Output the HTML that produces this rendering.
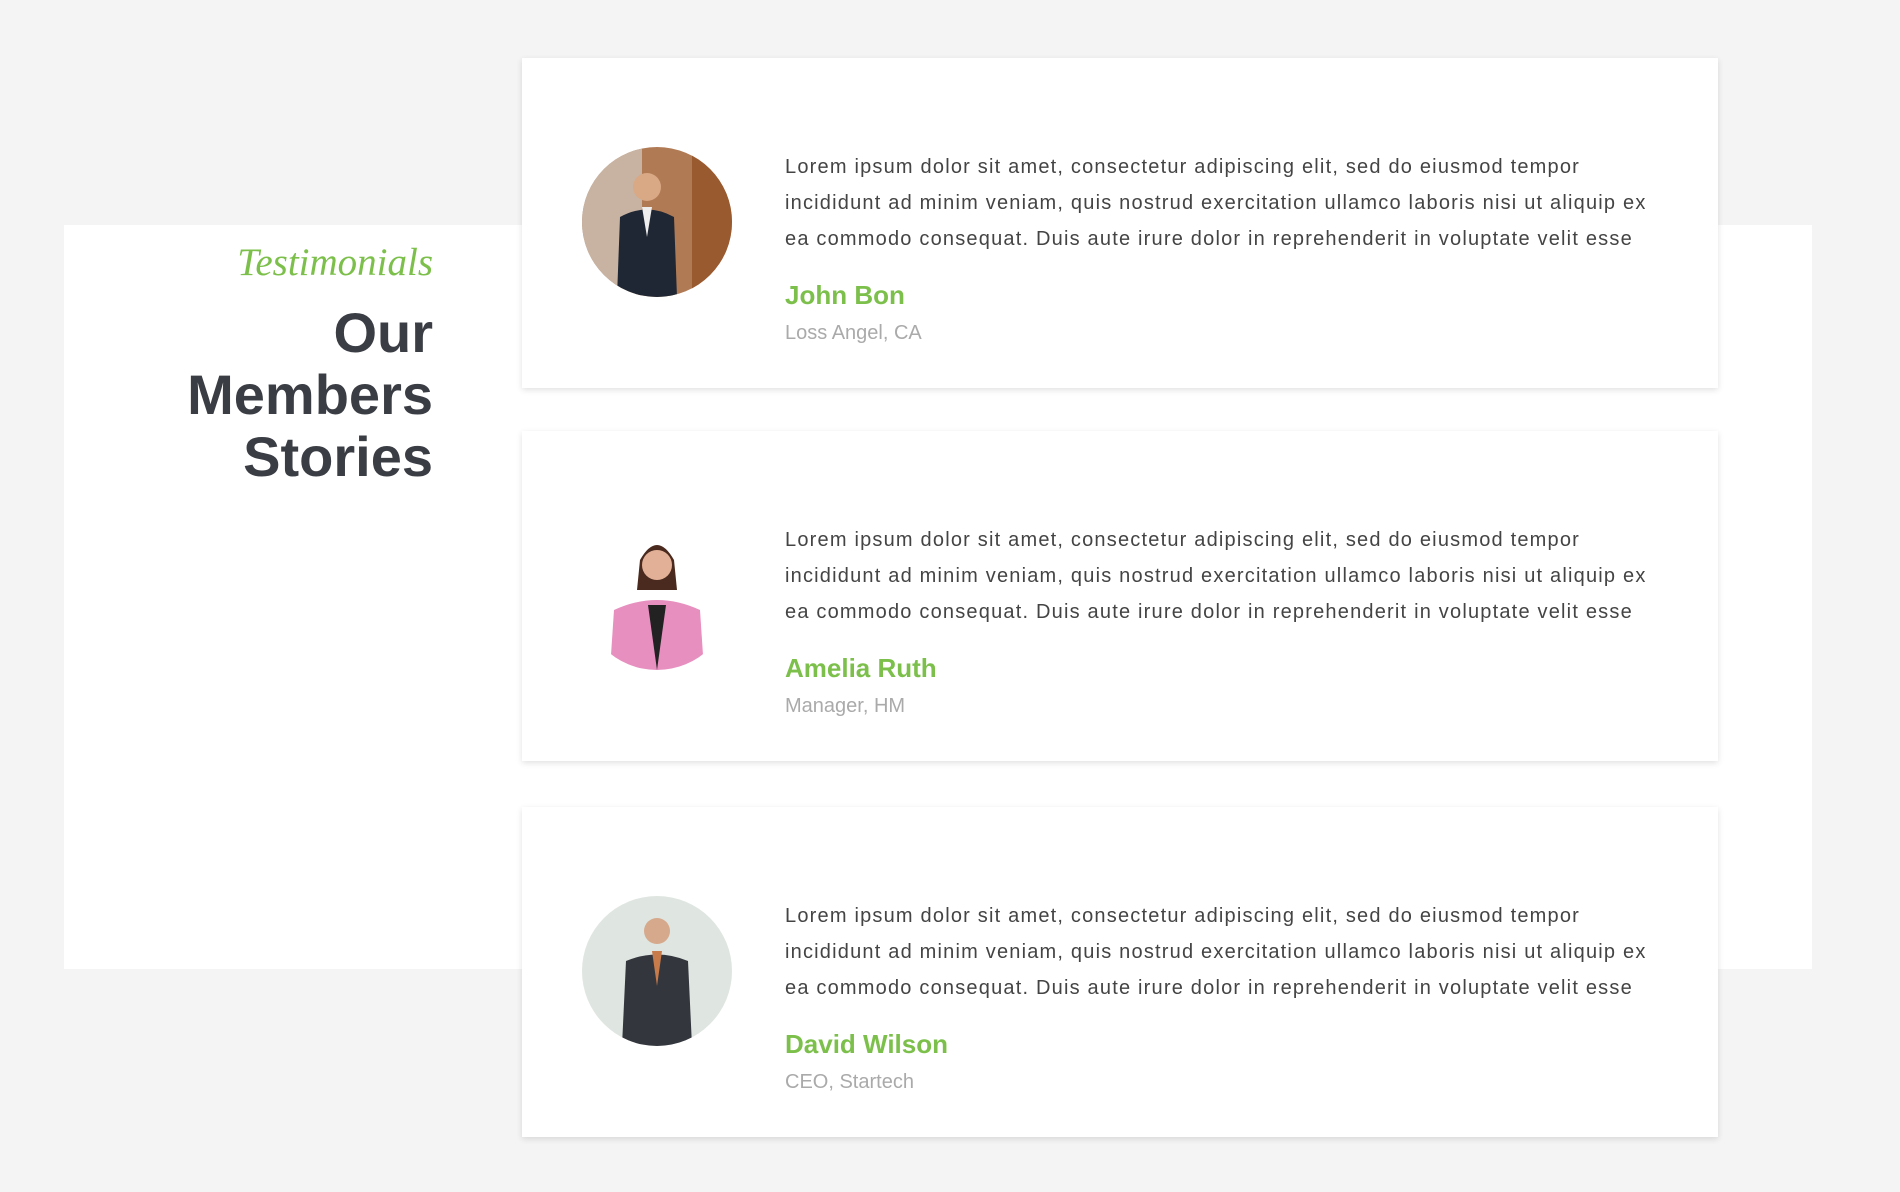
<!DOCTYPE html>
<html><head><meta charset="utf-8"><style>
body{margin:0;width:1900px;height:1192px;background:#f4f4f4;font-family:"Liberation Sans",sans-serif;position:relative;overflow:hidden}
.panel{position:absolute;left:64px;top:225px;width:1748px;height:744px;background:#fff}
.t1{position:absolute;right:1467px;top:240px;font-family:"Liberation Serif",cursive;font-style:italic;color:#7cc04b;font-size:39px}
.t2{position:absolute;right:1467px;top:302px;text-align:right;font-weight:bold;color:#3a3d44;font-size:56px;line-height:62px}
.card{position:absolute;left:522px;width:1196px;height:330px;background:#fff;box-shadow:0 2px 6px rgba(0,0,0,.12)}
.av{position:absolute;left:60px;top:89px;width:150px;height:150px;border-radius:50%;overflow:hidden}
.txt{position:absolute;left:263px;top:91px;font-size:20px;letter-spacing:1.2px;line-height:36px;color:#444;white-space:nowrap}
.nm{position:absolute;left:263px;top:222px;font-size:26px;font-weight:bold;color:#7cc04b}
.sb{position:absolute;left:263px;top:264px;font-size:20px;color:#aaa}
</style></head><body>
<div class="panel"></div>
<div class="t1">Testimonials</div>
<div class="t2">Our<br>Members<br>Stories</div>

<div class="card" style="top:58px">
<div class="av"><svg width="150" height="150"><rect width="150" height="150" fill="#b07a55"/><rect x="0" y="0" width="60" height="150" fill="#c8b3a3"/><rect x="110" y="0" width="40" height="150" fill="#9a5a30"/><circle cx="65" cy="40" r="14" fill="#d9a884"/><path d="M35 150 L38 70 Q65 55 92 70 L95 150Z" fill="#1e2733"/><path d="M60 60 L65 90 L70 60Z" fill="#eee"/></svg></div>
<div class="txt">Lorem ipsum dolor sit amet, consectetur adipiscing elit, sed do eiusmod tempor<br>incididunt ad minim veniam, quis nostrud exercitation ullamco laboris nisi ut aliquip ex<br>ea commodo consequat. Duis aute irure dolor in reprehenderit in voluptate velit esse</div>
<div class="nm">John Bon</div><div class="sb">Loss Angel, CA</div>
</div>

<div class="card" style="top:431px">
<div class="av"><svg width="150" height="150"><rect width="150" height="150" fill="#fff"/><path d="M58 40 Q75 10 92 40 L95 70 L55 70Z" fill="#4a2a1e"/><circle cx="75" cy="45" r="15" fill="#e2b096"/><path d="M28 150 L32 90 Q75 70 118 90 L122 150Z" fill="#e78fbf"/><path d="M66 85 L75 150 L84 85Z" fill="#222"/></svg></div>
<div class="txt">Lorem ipsum dolor sit amet, consectetur adipiscing elit, sed do eiusmod tempor<br>incididunt ad minim veniam, quis nostrud exercitation ullamco laboris nisi ut aliquip ex<br>ea commodo consequat. Duis aute irure dolor in reprehenderit in voluptate velit esse</div>
<div class="nm">Amelia Ruth</div><div class="sb">Manager, HM</div>
</div>

<div class="card" style="top:807px">
<div class="av"><svg width="150" height="150"><rect width="150" height="150" fill="#dfe5e0"/><circle cx="75" cy="35" r="13" fill="#d6a98c"/><path d="M40 150 L44 65 Q75 52 106 65 L110 150Z" fill="#33363d"/><path d="M70 55 L75 90 L80 55Z" fill="#c77a4a"/></svg></div>
<div class="txt">Lorem ipsum dolor sit amet, consectetur adipiscing elit, sed do eiusmod tempor<br>incididunt ad minim veniam, quis nostrud exercitation ullamco laboris nisi ut aliquip ex<br>ea commodo consequat. Duis aute irure dolor in reprehenderit in voluptate velit esse</div>
<div class="nm">David Wilson</div><div class="sb">CEO, Startech</div>
</div>
</body></html>
